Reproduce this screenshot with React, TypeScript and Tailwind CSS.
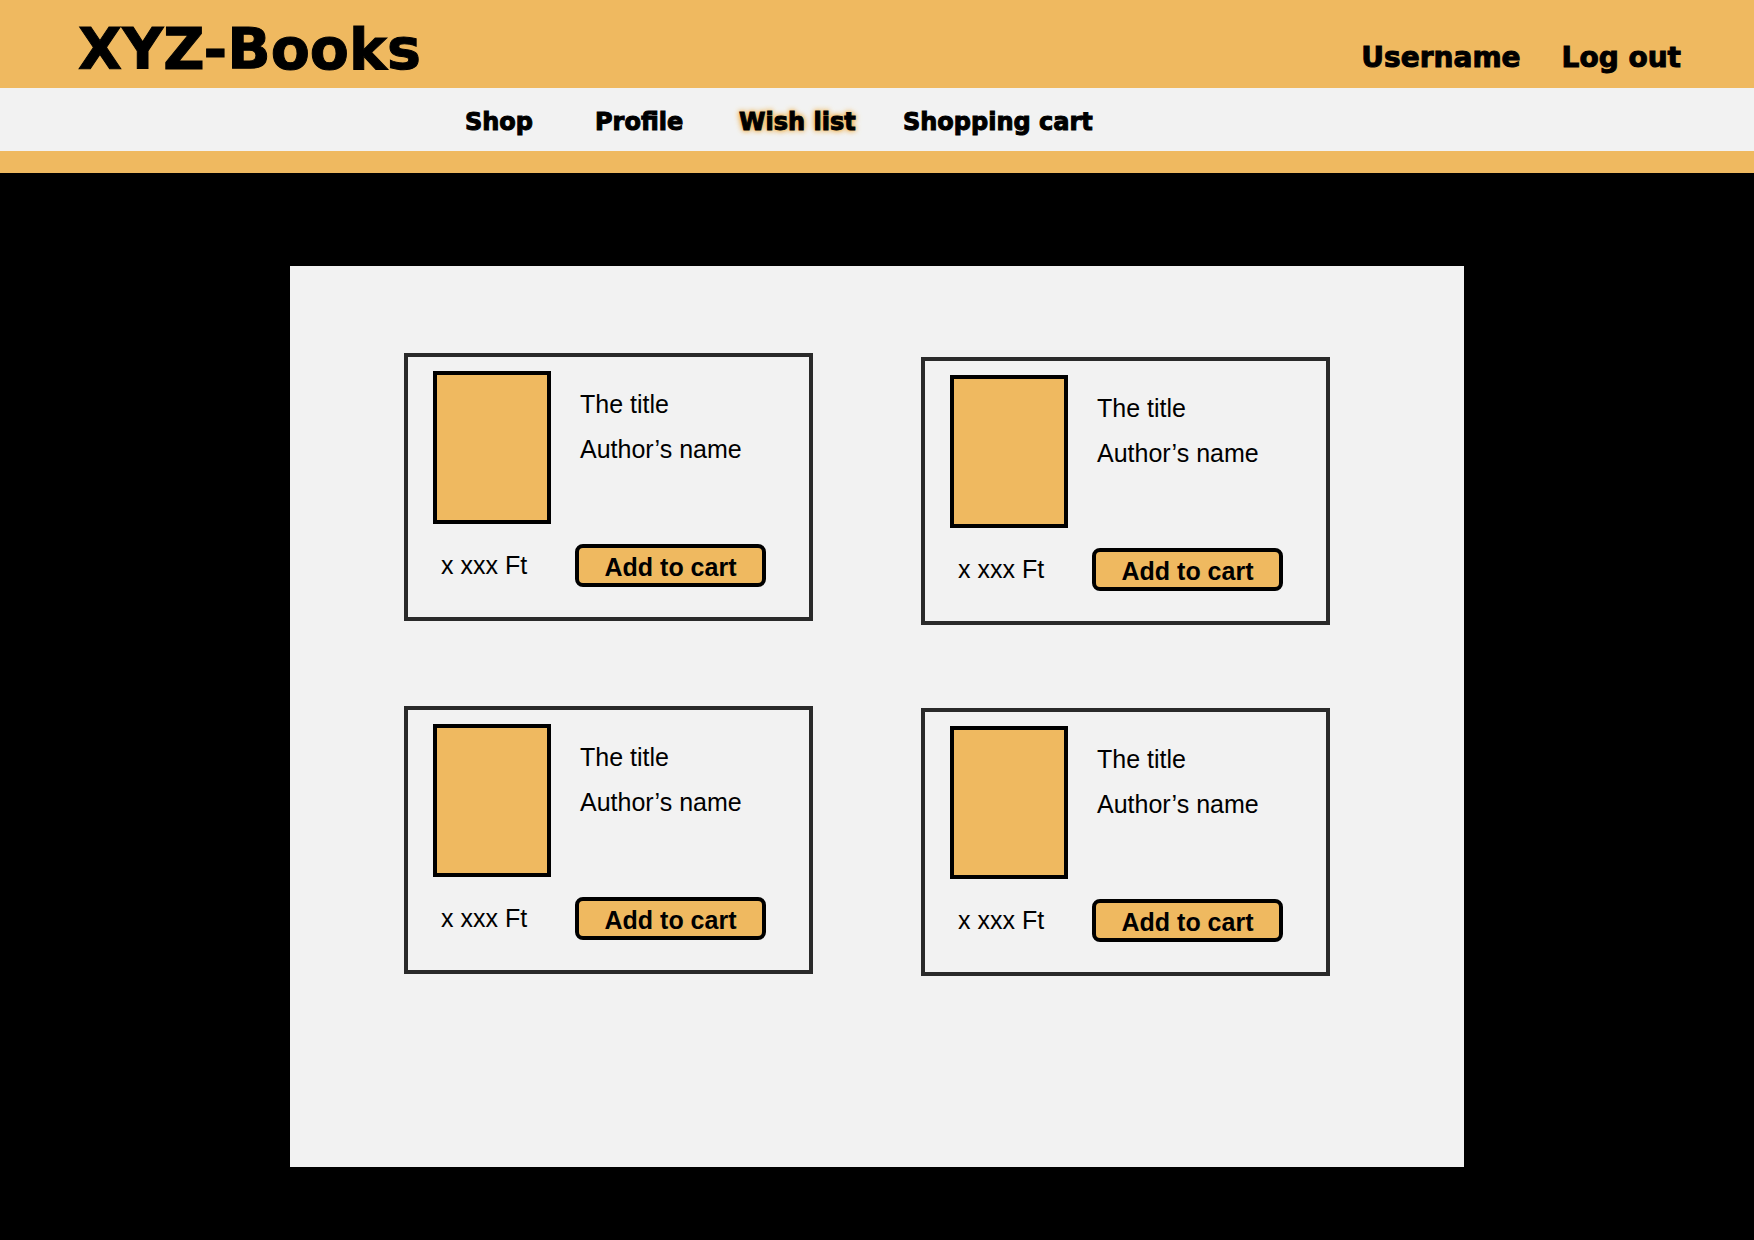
import React from "react";

// Mock wish list items
const wishItems = [
  { id: "b1", title: "The title", author: "Author’s name", price: "x xxx Ft", offset: "" },
  { id: "b2", title: "The title", author: "Author’s name", price: "x xxx Ft", offset: "mt-[4px]" },
  { id: "b3", title: "The title", author: "Author’s name", price: "x xxx Ft", offset: "" },
  { id: "b4", title: "The title", author: "Author’s name", price: "x xxx Ft", offset: "mt-[2px]" },
];

const navLinks = [
  { label: "Shop", width: "w-[130px]", active: false },
  { label: "Profile", width: "w-[144px]", active: false },
  { label: "Wish list", width: "w-[164px]", active: true },
  { label: "Shopping cart", width: "w-auto", active: false },
];

const heavy = "font-['DejaVu_Sans',sans-serif] font-bold [-webkit-text-stroke:1px_black]";

const BookCard = ({ item }: { item: (typeof wishItems)[number] }) => {
  return (
    <div
      className={`w-[409px] h-[268px] border-4 border-[#2a2a2a] pl-[25px] pt-[14px] flex flex-col ${item.offset}`}
    >
      <div className="flex">
        <div className="w-[118px] h-[153px] border-4 border-black bg-[#efb960]" />
        <div className="ml-[29px] pt-[20px] text-[25px] leading-[27px] text-black">
          <p>{item.title}</p>
          <p className="mt-[18px]">{item.author}</p>
        </div>
      </div>
      <div className="mt-[20px] flex items-center">
        <span className="w-[142px] pl-[8px] text-[25px] text-black">{item.price}</span>
        <button className="w-[191px] h-[43px] border-4 border-black rounded-[8px] bg-[#efb960] pt-[4px] font-bold text-[25px] leading-none text-black">
          Add to cart
        </button>
      </div>
    </div>
  );
};

const App = () => {
  return (
    <div className="min-h-screen bg-black font-['Liberation_Sans',Arial,sans-serif]">
      {/* top bar */}
      <header className="h-[88px] bg-[#efb960] flex items-start justify-between pl-[78px] pr-[73px]">
        <h1 className={`mt-[21px] text-[57px] leading-none text-black ${heavy}`}>XYZ-Books</h1>
        <div className={`mt-[44px] flex text-[28px] leading-none text-black ${heavy}`}>
          <span>Username</span>
          <span className="ml-[41px]">Log out</span>
        </div>
      </header>

      <nav className="h-[63px] bg-[#f2f2f2] flex items-start pl-[465px] pt-[22px]">
        {navLinks.map((link) => (
          <div key={link.label} className={link.width}>
            <span
              className={`text-[24px] leading-none text-black ${heavy} ${
                link.active ? "[text-shadow:0_0_6px_#efb960,0_0_6px_#efb960,0_0_4px_#efb960,0_0_2px_#efb960]" : ""
              }`}
            >
              {link.label}
            </span>
          </div>
        ))}
      </nav>
      <div className="h-[22px] bg-[#efb960]" />

      <main className="pt-[93px] pb-[73px]">
        <div className="mx-auto w-[1174px] h-[901px] bg-[#f2f2f2] pl-[114px] pt-[87px]">
          <div className="grid grid-cols-[409px_409px] gap-x-[108px] gap-y-[81px] items-start">
            {wishItems.map((item) => (
              <BookCard key={item.id} item={item} />
            ))}
          </div>
        </div>
      </main>
    </div>
  );
};

export default App;
